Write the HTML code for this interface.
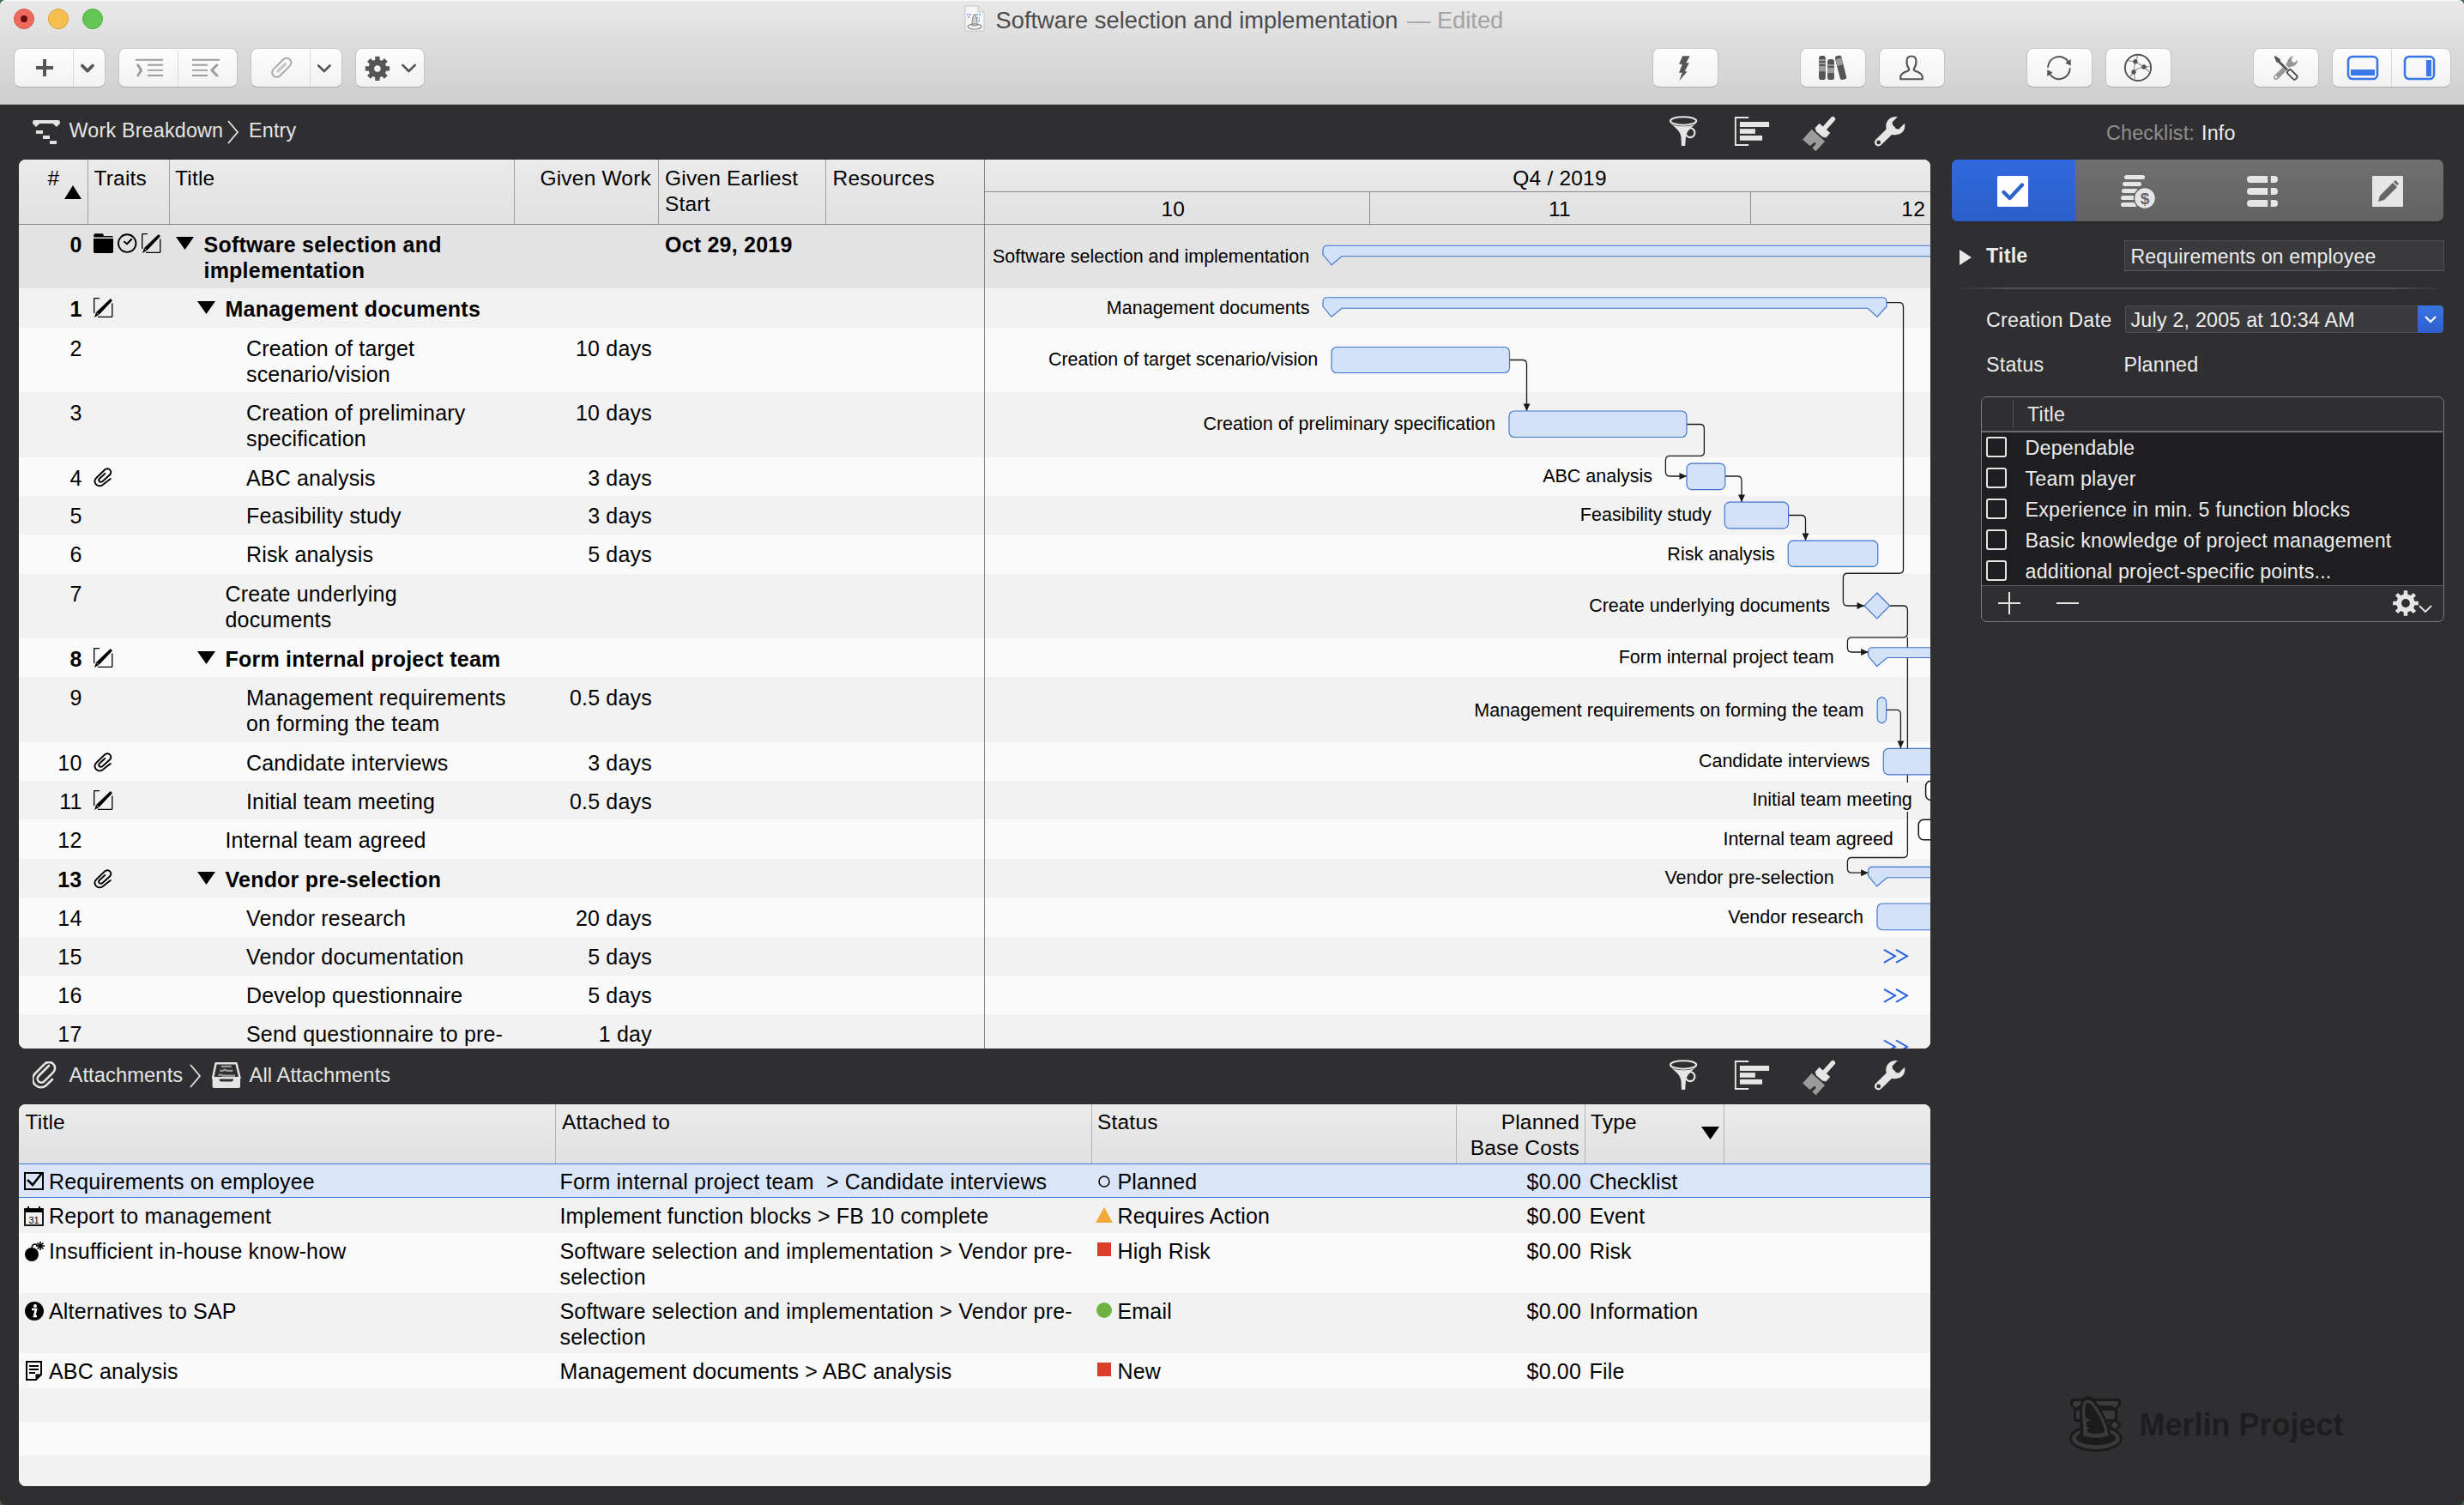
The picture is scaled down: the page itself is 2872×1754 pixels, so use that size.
<!DOCTYPE html>
<html><head><meta charset="utf-8"><style>
*{box-sizing:border-box;margin:0;padding:0}
html,body{width:2872px;height:1754px;overflow:hidden;background:#2f2f31;font-family:"Liberation Sans",sans-serif;position:relative}
.a{position:absolute}
.t{position:absolute;white-space:nowrap;color:#000}
</style></head>
<body>
<div class="a" style="left:0.00px;top:0.00px;width:2872.00px;height:122.00px;background:linear-gradient(#e9e9e9 0%,#dcdcdc 45%,#cfcfcf 100%);"></div>
<div class="a" style="left:0.00px;top:121.00px;width:2872.00px;height:1.00px;background:#b9b9b9;"></div>
<div class="a" style="left:16.00px;top:10.00px;width:24.00px;height:24.00px;border-radius:50%;background:#ee6a5e;border:1px solid #d5574b;"></div>
<div class="a" style="left:56.00px;top:10.00px;width:24.00px;height:24.00px;border-radius:50%;background:#f5be4f;border:1px solid #d9a23b;"></div>
<div class="a" style="left:96.00px;top:10.00px;width:24.00px;height:24.00px;border-radius:50%;background:#62c554;border:1px solid #50a944;"></div>
<div class="a" style="left:24.00px;top:18.00px;width:8.00px;height:8.00px;border-radius:50%;background:#4d0000;opacity:.85"></div>
<svg class="a" style="left:1124.00px;top:6.00px;" width="24" height="31" viewBox="0 0 24 31"><path d="M1 1h15l7 7v22H1z" fill="#f6f6f6" stroke="#c5c5c5" stroke-width="1"/><path d="M16 1v7h7" fill="#e8e8e8" stroke="#c5c5c5"/><path d="M3 11h5M14 11h5M4 14h3M14 15h4M13 18h5" stroke="#6d9ae0" stroke-width="1.6" stroke-dasharray="2 1"/><path d="M9 24 C9 17 10 12 12 10 C14 13 15 18 15 24z" fill="#d0d0d0" stroke="#888" stroke-width="1"/><ellipse cx="12" cy="25" rx="8" ry="3" fill="none" stroke="#888" stroke-width="1.2"/></svg>
<div class="t" style="top:7.66px;font-size:27.3px;line-height:32.76px;left:1160.50px;color:#4c4c4c;">Software selection and implementation</div>
<div class="t" style="top:7.66px;font-size:27.3px;line-height:32.76px;left:1640.00px;color:#a3a3a3;">— Edited</div>
<div class="a" style="left:15.50px;top:56.00px;width:107.00px;height:46.00px;background:linear-gradient(#fdfdfd,#f2f2f2);border:1px solid #c4c4c4;border-top-color:#cfcfcf;border-bottom-color:#aaaaaa;border-radius:8px;"></div>
<div class="a" style="left:84.50px;top:57.50px;width:1.50px;height:43.00px;background:#d9d9d9;"></div>
<div class="a" style="left:137.50px;top:56.00px;width:139.00px;height:46.00px;background:linear-gradient(#fdfdfd,#f2f2f2);border:1px solid #c4c4c4;border-top-color:#cfcfcf;border-bottom-color:#aaaaaa;border-radius:8px;"></div>
<div class="a" style="left:206.50px;top:57.50px;width:1.50px;height:43.00px;background:#d9d9d9;"></div>
<div class="a" style="left:291.50px;top:56.00px;width:107.00px;height:46.00px;background:linear-gradient(#fdfdfd,#f2f2f2);border:1px solid #c4c4c4;border-top-color:#cfcfcf;border-bottom-color:#aaaaaa;border-radius:8px;"></div>
<div class="a" style="left:360.50px;top:57.50px;width:1.50px;height:43.00px;background:#d9d9d9;"></div>
<div class="a" style="left:413.50px;top:56.00px;width:81.00px;height:46.00px;background:linear-gradient(#fdfdfd,#f2f2f2);border:1px solid #c4c4c4;border-top-color:#cfcfcf;border-bottom-color:#aaaaaa;border-radius:8px;"></div>
<div class="a" style="left:1925.50px;top:56.00px;width:77.00px;height:46.00px;background:linear-gradient(#fdfdfd,#f2f2f2);border:1px solid #c4c4c4;border-top-color:#cfcfcf;border-bottom-color:#aaaaaa;border-radius:8px;"></div>
<div class="a" style="left:2097.50px;top:56.00px;width:77.00px;height:46.00px;background:linear-gradient(#fdfdfd,#f2f2f2);border:1px solid #c4c4c4;border-top-color:#cfcfcf;border-bottom-color:#aaaaaa;border-radius:8px;"></div>
<div class="a" style="left:2189.50px;top:56.00px;width:77.00px;height:46.00px;background:linear-gradient(#fdfdfd,#f2f2f2);border:1px solid #c4c4c4;border-top-color:#cfcfcf;border-bottom-color:#aaaaaa;border-radius:8px;"></div>
<div class="a" style="left:2361.50px;top:56.00px;width:77.00px;height:46.00px;background:linear-gradient(#fdfdfd,#f2f2f2);border:1px solid #c4c4c4;border-top-color:#cfcfcf;border-bottom-color:#aaaaaa;border-radius:8px;"></div>
<div class="a" style="left:2453.50px;top:56.00px;width:77.00px;height:46.00px;background:linear-gradient(#fdfdfd,#f2f2f2);border:1px solid #c4c4c4;border-top-color:#cfcfcf;border-bottom-color:#aaaaaa;border-radius:8px;"></div>
<div class="a" style="left:2625.50px;top:56.00px;width:77.00px;height:46.00px;background:linear-gradient(#fdfdfd,#f2f2f2);border:1px solid #c4c4c4;border-top-color:#cfcfcf;border-bottom-color:#aaaaaa;border-radius:8px;"></div>
<div class="a" style="left:2717.50px;top:56.00px;width:139.00px;height:46.00px;background:linear-gradient(#fdfdfd,#f2f2f2);border:1px solid #c4c4c4;border-top-color:#cfcfcf;border-bottom-color:#aaaaaa;border-radius:8px;"></div>
<div class="a" style="left:2786.50px;top:57.50px;width:1.50px;height:43.00px;background:#d9d9d9;"></div>
<svg class="a" style="left:10px;top:50px" width="300" height="60" viewBox="0 0 2464 493" preserveAspectRatio="none"><path d="M263 238 H427 M345 157 V320" stroke="#555555" stroke-width="33"/><path d="M705 218 L755 268 L805 218" fill="none" stroke="#555555" stroke-width="30" stroke-linecap="round" stroke-linejoin="round"/><path d="M1215 163 H1478 M1330 212 H1478 M1330 262 H1478 M1330 312 H1478" stroke="#9c9c9c" stroke-width="16"/><path d="M1238 212 L1270 262 L1238 312" fill="none" stroke="#9c9c9c" stroke-width="24" stroke-linecap="round" stroke-linejoin="round"/><path d="M1758 163 H2020 M1758 212 H1905 M1758 262 H1905 M1758 312 H1905" stroke="#9c9c9c" stroke-width="16"/><path d="M1995 212 L1945 262 L1995 312" fill="none" stroke="#9c9c9c" stroke-width="24" stroke-linecap="round" stroke-linejoin="round"/></svg>
<svg class="a" style="left:285px;top:50px" width="220" height="60" viewBox="0 0 2464 672" preserveAspectRatio="none"><g transform="rotate(-45 485 322)"><rect x="335" y="262" width="300" height="120" rx="60" fill="none" stroke="#a9a9a9" stroke-width="22"/><rect x="400" y="302" width="170" height="40" rx="20" fill="#c9c9c9"/></g><path d="M965 295 L1040 370 L1115 295" fill="none" stroke="#555555" stroke-width="30" stroke-linecap="round" stroke-linejoin="round"/><rect x="1705" y="177" width="60" height="80" fill="#555555" transform="rotate(0 1735 335)"/><rect x="1705" y="177" width="60" height="80" fill="#555555" transform="rotate(45 1735 335)"/><rect x="1705" y="177" width="60" height="80" fill="#555555" transform="rotate(90 1735 335)"/><rect x="1705" y="177" width="60" height="80" fill="#555555" transform="rotate(135 1735 335)"/><rect x="1705" y="177" width="60" height="80" fill="#555555" transform="rotate(180 1735 335)"/><rect x="1705" y="177" width="60" height="80" fill="#555555" transform="rotate(225 1735 335)"/><rect x="1705" y="177" width="60" height="80" fill="#555555" transform="rotate(270 1735 335)"/><rect x="1705" y="177" width="60" height="80" fill="#555555" transform="rotate(315 1735 335)"/><circle cx="1735" cy="335" r="118" fill="#555555"/><circle cx="1735" cy="335" r="42" fill="#f6f6f6"/><path d="M2065 290 L2145 370 L2225 290" fill="none" stroke="#555555" stroke-width="30" stroke-linecap="round" stroke-linejoin="round"/></svg>
<svg class="a" style="left:1920px;top:50px" width="90" height="58" viewBox="0 0 2335 1505" preserveAspectRatio="none"><path d="M1070 395 L1290 395 L1175 605 L1265 605 L1135 860 L1210 860 L965 1150 L1055 900 L960 900 L1060 640 L960 640 Z" fill="#555555"/></svg>
<svg class="a" style="left:2095px;top:50px" width="180" height="58" viewBox="0 0 2464 794" preserveAspectRatio="none"><rect x="343" y="205" width="107" height="385" rx="40" fill="#555555"/><rect x="343" y="262" width="107" height="28" fill="#9c9c9c"/><rect x="343" y="315" width="107" height="28" fill="#9c9c9c"/><rect x="343" y="370" width="107" height="85" fill="#9c9c9c"/><rect x="480" y="260" width="108" height="330" rx="40" fill="#555555"/><rect x="480" y="343" width="108" height="25" fill="#9c9c9c"/><rect x="480" y="395" width="108" height="85" fill="#9c9c9c"/><g transform="rotate(-14 692 395)"><rect x="640" y="200" width="104" height="390" rx="35" fill="#555555"/><rect x="640" y="245" width="104" height="110" fill="#9c9c9c"/></g><path d="M1645 578 L1645 545 C1645 480 1720 470 1775 440 C1790 432 1780 405 1768 390 C1745 360 1745 320 1745 290 C1745 235 1775 212 1820 212 C1865 212 1895 235 1895 290 C1895 320 1895 360 1872 390 C1860 405 1850 432 1865 440 C1920 470 1995 480 1995 545 L1995 578 Z" fill="none" stroke="#555555" stroke-width="30" stroke-linejoin="round"/></svg>
<svg class="a" style="left:2355px;top:50px" width="90" height="58" viewBox="0 0 2335 1505" preserveAspectRatio="none"><path d="M830 745 A335 335 0 0 1 1440 560" fill="none" stroke="#555555" stroke-width="50"/><path d="M1525 495 L1525 690 L1355 610 Z" fill="#555555"/><path d="M1500 760 A335 335 0 0 1 880 935" fill="none" stroke="#555555" stroke-width="50"/><path d="M810 810 L810 1010 L975 895 Z" fill="#555555"/></svg>
<svg class="a" style="left:2450px;top:50px" width="90" height="58" viewBox="0 0 2335 1505" preserveAspectRatio="none"><g stroke="#8e8e8e" stroke-width="30" fill="none"><path d="M800 545 L1010 565 M1080 390 L1010 565 L1270 725 M1010 565 Q975 720 960 880 M1270 725 L1445 720 M1270 725 L1420 870 M1270 725 Q1080 760 960 880 M960 880 L850 1020 M960 880 L1000 1100"/></g><circle cx="1090" cy="750" r="392" fill="none" stroke="#555555" stroke-width="50"/><g fill="#555555"><circle cx="1010" cy="565" r="70"/><circle cx="1270" cy="725" r="70"/><circle cx="960" cy="880" r="70"/></g></svg>
<svg class="a" style="left:2620px;top:50px" width="90" height="58" viewBox="0 0 2335 1505" preserveAspectRatio="none"><path d="M855 1045 L1240 660" stroke="#969696" stroke-width="150" stroke-linecap="round"/><path d="M1180 640 C1200 470 1290 400 1390 395 L1320 480 L1340 570 L1420 600 L1500 510 C1510 640 1430 700 1290 720 Z" fill="#969696"/><circle cx="855" cy="1040" r="38" fill="#f6f6f6"/><path d="M870 470 L1230 830" stroke="#f6f6f6" stroke-width="130"/><path d="M800 420 L835 390 L985 500 L985 535 L900 590 L865 575 Z" fill="#555555"/><path d="M920 545 L1230 855" stroke="#555555" stroke-width="75"/><g transform="rotate(-45 1340 955)"><rect x="1265" y="790" width="150" height="340" rx="55" fill="#f6f6f6" stroke="#f6f6f6" stroke-width="80"/><rect x="1265" y="790" width="150" height="340" rx="55" fill="#f4f4f4" stroke="#555555" stroke-width="52"/></g></svg>
<svg class="a" style="left:2735.00px;top:64.00px;" width="38" height="30" viewBox="0 0 38 30"><rect x="2" y="2" width="34" height="26" rx="5" fill="none" stroke="#3b78e7" stroke-width="2.6"/><rect x="5" y="17" width="28" height="7" fill="#3b78e7"/></svg>
<svg class="a" style="left:2801.00px;top:64.00px;" width="38" height="30" viewBox="0 0 38 30"><rect x="2" y="2" width="34" height="26" rx="5" fill="none" stroke="#3b78e7" stroke-width="2.6"/><rect x="27" y="6" width="6" height="19" fill="#3b78e7"/></svg>
<svg class="a" style="left:30px;top:130px" width="50" height="45" viewBox="0 0 1672 1505" preserveAspectRatio="none"><g fill="#e4e4e4"><path d="M340 335 H1265 Q1335 335 1335 410 V470 L1200 600 L1060 470 H540 L400 600 L270 470 V410 Q270 335 340 335 Z"/><rect x="400" y="735" width="270" height="130"/><rect x="670" y="935" width="265" height="135"/><rect x="935" y="1140" width="270" height="130"/></g></svg>
<div class="t" style="top:139.45px;font-size:23.3px;line-height:27.96px;left:80.50px;color:#e4e4e4;letter-spacing:0.2px;">Work Breakdown</div>
<svg class="a" style="left:264.00px;top:140.00px;" width="16" height="28" viewBox="0 0 16 28"><path d="M2 1 L13 14 L2 27" fill="none" stroke="#e4e4e4" stroke-width="1.8"/></svg>
<div class="t" style="top:139.45px;font-size:23.3px;line-height:27.96px;left:290.00px;color:#e4e4e4;letter-spacing:0.2px;">Entry</div>
<svg class="a" style="left:38.00px;top:1237.00px;" width="30" height="32" viewBox="0 0 30 32"><path d="M20 5 L8 17 a4.5 4.5 0 0 0 6.4 6.4 L25 12.8 a7 7 0 0 0 -9.9 -9.9 L3.5 14.5 a9.5 9.5 0 0 0 13.4 13.4 L24 21" fill="none" stroke="#e4e4e4" stroke-width="2.6" stroke-linecap="round" transform="translate(-1,0)"/></svg>
<div class="t" style="top:1238.57px;font-size:23.7px;line-height:28.44px;left:80.50px;color:#e4e4e4;letter-spacing:0.1px;">Attachments</div>
<svg class="a" style="left:220.00px;top:1240.00px;" width="16" height="28" viewBox="0 0 16 28"><path d="M2 1 L13 14 L2 27" fill="none" stroke="#e4e4e4" stroke-width="1.8"/></svg>
<svg class="a" style="left:0px;top:1150px" width="400" height="150" viewBox="0 0 2464 924" preserveAspectRatio="none"><path d="M1550 550 H1697 L1722 655 H1528 Z" fill="none" stroke="#e4e4e4" stroke-width="15" stroke-linejoin="round"/><path d="M1525 650 H1725 V715 Q1725 727 1713 727 H1537 Q1525 727 1525 715 Z M1575 650 V668 Q1575 680 1587 680 H1663 Q1675 680 1675 668 V650 Z" fill="#e4e4e4" fill-rule="evenodd"/><path d="M1588 572 H1662 M1578 603 H1600 Q1615 590 1630 603 H1672 M1568 638 Q1580 625 1600 638 H1688" fill="none" stroke="#9a9a9a" stroke-width="13"/></svg>
<div class="t" style="top:1238.57px;font-size:23.7px;line-height:28.44px;left:290.50px;color:#e4e4e4;letter-spacing:0.1px;">All Attachments</div>
<svg class="a" style="left:1930px;top:125.0px" width="310" height="60.0" viewBox="0 0 2464 477" preserveAspectRatio="none"><path d="M135 140 A120 37 0 0 0 375 140 C340 190 292 205 278 272 L272 357 L238 357 L234 272 C220 205 168 190 135 140 Z" fill="#e6e6e6"/><ellipse cx="255" cy="127" rx="120" ry="38" fill="none" stroke="#e6e6e6" stroke-width="17"/><circle cx="318" cy="236" r="43" fill="none" stroke="#e6e6e6" stroke-width="17"/><path d="M860 95 L738 95 L738 350 L860 350" fill="none" stroke="#e6e6e6" stroke-width="15"/><rect x="778" y="135" width="272" height="48" fill="#e6e6e6"/><rect x="778" y="200" width="143" height="45" fill="#e6e6e6"/><rect x="778" y="262" width="208" height="46" fill="#e6e6e6"/><g transform="rotate(42 1520 240)"><rect x="1500" y="40" width="44" height="150" rx="22" fill="#e6e6e6"/><path d="M1455 175 L1590 175 L1590 235 L1560 250 L1485 250 L1455 235 Z" fill="#e6e6e6"/><path d="M1440 265 L1605 265 L1605 390 L1560 390 L1560 340 Q1555 330 1540 335 L1530 390 L1440 390 Z" fill="#9b9b9b"/></g><path d="M2062 325 L2185 205" stroke="#e6e6e6" stroke-width="72" stroke-linecap="round"/><path d="M2135 200 C2120 130 2170 80 2240 88 L2190 140 L2200 190 L2250 205 L2305 150 C2320 225 2260 270 2185 252 Z" fill="#e6e6e6"/><circle cx="2064" cy="325" r="19" fill="#2e2e30"/></svg>
<svg class="a" style="left:1930px;top:1225.0px" width="310" height="60.0" viewBox="0 0 2464 477" preserveAspectRatio="none"><path d="M135 140 A120 37 0 0 0 375 140 C340 190 292 205 278 272 L272 357 L238 357 L234 272 C220 205 168 190 135 140 Z" fill="#e6e6e6"/><ellipse cx="255" cy="127" rx="120" ry="38" fill="none" stroke="#e6e6e6" stroke-width="17"/><circle cx="318" cy="236" r="43" fill="none" stroke="#e6e6e6" stroke-width="17"/><path d="M860 95 L738 95 L738 350 L860 350" fill="none" stroke="#e6e6e6" stroke-width="15"/><rect x="778" y="135" width="272" height="48" fill="#e6e6e6"/><rect x="778" y="200" width="143" height="45" fill="#e6e6e6"/><rect x="778" y="262" width="208" height="46" fill="#e6e6e6"/><g transform="rotate(42 1520 240)"><rect x="1500" y="40" width="44" height="150" rx="22" fill="#e6e6e6"/><path d="M1455 175 L1590 175 L1590 235 L1560 250 L1485 250 L1455 235 Z" fill="#e6e6e6"/><path d="M1440 265 L1605 265 L1605 390 L1560 390 L1560 340 Q1555 330 1540 335 L1530 390 L1440 390 Z" fill="#9b9b9b"/></g><path d="M2062 325 L2185 205" stroke="#e6e6e6" stroke-width="72" stroke-linecap="round"/><path d="M2135 200 C2120 130 2170 80 2240 88 L2190 140 L2200 190 L2250 205 L2305 150 C2320 225 2260 270 2185 252 Z" fill="#e6e6e6"/><circle cx="2064" cy="325" r="19" fill="#2e2e30"/></svg>
<div class="a" style="left:22px;top:186px;width:2228px;height:1036px;border-radius:8px;overflow:hidden;background:#fafafa">
<div class="a" style="left:-22px;top:-186px;width:2872px;height:1754px">
<div class="a" style="left:0.00px;top:186.00px;width:2872.00px;height:75.00px;background:linear-gradient(#ebebeb,#e1e1e1);"></div>
<div class="a" style="left:0.00px;top:261.00px;width:2872.00px;height:1.00px;background:#8c8c8c;"></div>
<div class="a" style="left:0.00px;top:262.25px;width:2872.00px;height:75.00px;background:#e3e3e3;"></div>
<div class="a" style="left:0.00px;top:336.25px;width:2872.00px;height:45.50px;background:#f2f2f2;"></div>
<div class="a" style="left:0.00px;top:381.75px;width:2872.00px;height:75.25px;background:#fafafa;"></div>
<div class="a" style="left:0.00px;top:457.00px;width:2872.00px;height:76.00px;background:#f2f2f2;"></div>
<div class="a" style="left:0.00px;top:533.00px;width:2872.00px;height:44.50px;background:#fafafa;"></div>
<div class="a" style="left:0.00px;top:577.50px;width:2872.00px;height:45.00px;background:#f2f2f2;"></div>
<div class="a" style="left:0.00px;top:622.50px;width:2872.00px;height:46.00px;background:#fafafa;"></div>
<div class="a" style="left:0.00px;top:668.50px;width:2872.00px;height:75.50px;background:#f2f2f2;"></div>
<div class="a" style="left:0.00px;top:744.00px;width:2872.00px;height:45.00px;background:#fafafa;"></div>
<div class="a" style="left:0.00px;top:789.00px;width:2872.00px;height:76.00px;background:#f2f2f2;"></div>
<div class="a" style="left:0.00px;top:865.00px;width:2872.00px;height:45.00px;background:#fafafa;"></div>
<div class="a" style="left:0.00px;top:910.00px;width:2872.00px;height:45.00px;background:#f2f2f2;"></div>
<div class="a" style="left:0.00px;top:955.00px;width:2872.00px;height:46.00px;background:#fafafa;"></div>
<div class="a" style="left:0.00px;top:1001.00px;width:2872.00px;height:45.00px;background:#f2f2f2;"></div>
<div class="a" style="left:0.00px;top:1046.00px;width:2872.00px;height:45.50px;background:#fafafa;"></div>
<div class="a" style="left:0.00px;top:1091.50px;width:2872.00px;height:45.00px;background:#f2f2f2;"></div>
<div class="a" style="left:0.00px;top:1136.50px;width:2872.00px;height:45.00px;background:#fafafa;"></div>
<div class="a" style="left:0.00px;top:1181.50px;width:2872.00px;height:58.50px;background:#f2f2f2;"></div>
<div class="a" style="left:102.00px;top:186.00px;width:1.00px;height:75.00px;background:#a0a0a0;"></div>
<div class="a" style="left:197.00px;top:186.00px;width:1.00px;height:75.00px;background:#a0a0a0;"></div>
<div class="a" style="left:599.00px;top:186.00px;width:1.00px;height:75.00px;background:#a0a0a0;"></div>
<div class="a" style="left:767.00px;top:186.00px;width:1.00px;height:75.00px;background:#a0a0a0;"></div>
<div class="a" style="left:962.00px;top:186.00px;width:1.00px;height:75.00px;background:#a0a0a0;"></div>
<div class="a" style="left:1147.00px;top:186.00px;width:1.00px;height:1040.00px;background:#858585;"></div>
<div class="a" style="left:1147.00px;top:223.00px;width:2872.00px;height:1.00px;background:#8c8c8c;"></div>
<div class="a" style="left:1596.00px;top:223.00px;width:1.00px;height:38.00px;background:#8c8c8c;"></div>
<div class="a" style="left:2040.00px;top:223.00px;width:1.00px;height:38.00px;background:#8c8c8c;"></div>
<div class="t" style="top:192.81px;font-size:24.5px;line-height:29.4px;left:55.50px;letter-spacing:0.2px;">#</div>
<svg class="a" style="left:75.00px;top:216.00px;" width="20" height="16" viewBox="0 0 20 16"><path d="M10 0 L20 16 L0 16 Z" fill="#000"/></svg>
<div class="t" style="top:192.81px;font-size:24.5px;line-height:29.4px;left:109.50px;letter-spacing:0.2px;">Traits</div>
<div class="t" style="top:192.81px;font-size:24.5px;line-height:29.4px;left:204.00px;letter-spacing:0.2px;">Title</div>
<div class="t" style="top:192.81px;font-size:24.5px;line-height:29.4px;right:2113.00px;text-align:right;letter-spacing:0.2px;">Given Work</div>
<div class="t" style="top:192.81px;font-size:24.5px;line-height:29.4px;left:775.00px;letter-spacing:0.2px;">Given Earliest</div>
<div class="t" style="top:222.81px;font-size:24.5px;line-height:29.4px;left:775.00px;letter-spacing:0.2px;">Start</div>
<div class="t" style="top:192.81px;font-size:24.5px;line-height:29.4px;left:970.50px;letter-spacing:0.2px;">Resources</div>
<div class="t" style="top:192.81px;font-size:24.5px;line-height:29.4px;left:1318.00px;width:1000px;text-align:center;letter-spacing:0.2px;">Q4 / 2019</div>
<div class="t" style="top:229.11px;font-size:24.5px;line-height:29.4px;left:1353.50px;letter-spacing:0.2px;">10</div>
<div class="t" style="top:229.11px;font-size:24.5px;line-height:29.4px;left:1805.00px;letter-spacing:0.2px;">11</div>
<div class="t" style="top:229.11px;font-size:24.5px;line-height:29.4px;right:628.00px;text-align:right;letter-spacing:0.2px;">12</div>
<div class="t" style="top:270.09px;font-size:25px;line-height:30.0px;right:2776.50px;text-align:right;font-weight:bold;letter-spacing:0.22px;">0</div>
<svg class="a" style="left:109.40px;top:272.25px;" width="24" height="24" viewBox="0 0 24 24"><path d="M0.3 4.5 V2 Q0.3 0.3 2 0.3 H10 Q11.5 0.3 11.8 2 V3 H21.5 Q23 3 23 4.5 Z" fill="#000"/><path d="M0 6 H23 V21.3 Q23 23 21.3 23 H1.7 Q0 23 0 21.3 Z" fill="#000"/></svg>
<svg class="a" style="left:137.00px;top:272.25px;" width="24" height="24" viewBox="0 0 24 24"><circle cx="11.2" cy="11.6" r="10.3" fill="none" stroke="#000" stroke-width="1.9"/><path d="M7.4 9.3 L11 12.3 L16.8 6.3" fill="none" stroke="#000" stroke-width="2"/></svg>
<svg class="a" style="left:165.00px;top:272.25px;" width="24" height="24" viewBox="0 0 24 24"><path d="M7 0.7 H1.2 Q0.7 0.7 0.7 1.2 V18" fill="none" stroke="#000" stroke-width="1.3"/><path d="M5 22.3 H21.3 Q21.8 22.3 21.8 21.8 V6.5" fill="none" stroke="#000" stroke-width="1.3"/><path d="M19.5 1.2 Q21.8 1.5 21.6 3.8 L6.5 19.8 L3 17 Z" fill="#000"/><path d="M3 17 L6.5 19.8 L1 23 Z" fill="#000"/><path d="M4 18 L5.5 19.5" stroke="#fff" stroke-width="0.8"/></svg>
<svg class="a" style="left:205.00px;top:275.75px;" width="22" height="16" viewBox="0 0 22 16"><path d="M0 0 L21 0 L10.5 15 Z" fill="#000"/></svg>
<div class="t" style="top:270.09px;font-size:25px;line-height:30.0px;left:237.50px;font-weight:bold;letter-spacing:0.22px;">Software selection and</div>
<div class="t" style="top:300.09px;font-size:25px;line-height:30.0px;left:237.50px;font-weight:bold;letter-spacing:0.22px;">implementation</div>
<div class="t" style="top:270.09px;font-size:25px;line-height:30.0px;left:775.00px;font-weight:bold;letter-spacing:0.22px;">Oct 29, 2019</div>
<div class="t" style="top:345.09px;font-size:25px;line-height:30.0px;right:2776.50px;text-align:right;font-weight:bold;letter-spacing:0.22px;">1</div>
<svg class="a" style="left:109.00px;top:347.25px;" width="24" height="24" viewBox="0 0 24 24"><path d="M7 0.7 H1.2 Q0.7 0.7 0.7 1.2 V18" fill="none" stroke="#000" stroke-width="1.3"/><path d="M5 22.3 H21.3 Q21.8 22.3 21.8 21.8 V6.5" fill="none" stroke="#000" stroke-width="1.3"/><path d="M19.5 1.2 Q21.8 1.5 21.6 3.8 L6.5 19.8 L3 17 Z" fill="#000"/><path d="M3 17 L6.5 19.8 L1 23 Z" fill="#000"/><path d="M4 18 L5.5 19.5" stroke="#fff" stroke-width="0.8"/></svg>
<svg class="a" style="left:230.00px;top:350.75px;" width="22" height="16" viewBox="0 0 22 16"><path d="M0 0 L21 0 L10.5 15 Z" fill="#000"/></svg>
<div class="t" style="top:345.09px;font-size:25px;line-height:30.0px;left:262.50px;font-weight:bold;letter-spacing:0.22px;">Management documents</div>
<div class="t" style="top:390.59px;font-size:25px;line-height:30.0px;right:2776.50px;text-align:right;letter-spacing:0.17px;">2</div>
<div class="t" style="top:390.59px;font-size:25px;line-height:30.0px;left:287.00px;letter-spacing:0.17px;">Creation of target</div>
<div class="t" style="top:420.59px;font-size:25px;line-height:30.0px;left:287.00px;letter-spacing:0.17px;">scenario/vision</div>
<div class="t" style="top:390.59px;font-size:25px;line-height:30.0px;right:2112.20px;text-align:right;letter-spacing:0.17px;">10 days</div>
<div class="t" style="top:465.84px;font-size:25px;line-height:30.0px;right:2776.50px;text-align:right;letter-spacing:0.17px;">3</div>
<div class="t" style="top:465.84px;font-size:25px;line-height:30.0px;left:287.00px;letter-spacing:0.17px;">Creation of preliminary</div>
<div class="t" style="top:495.84px;font-size:25px;line-height:30.0px;left:287.00px;letter-spacing:0.17px;">specification</div>
<div class="t" style="top:465.84px;font-size:25px;line-height:30.0px;right:2112.20px;text-align:right;letter-spacing:0.17px;">10 days</div>
<div class="t" style="top:541.84px;font-size:25px;line-height:30.0px;right:2776.50px;text-align:right;letter-spacing:0.17px;">4</div>
<svg class="a" style="left:109.00px;top:543.50px;" width="24" height="24" viewBox="0 0 24 24"><path d="M19.8 14 L10.5 21.2 C7.5 23.3 3.8 22.3 2.2 19.5 C1 17.2 1.5 14.5 3.5 12.8 L12.8 3.8 C14.8 1.8 17.8 1.8 19.3 3.8 C20.8 5.8 20.3 8.2 18.5 9.8 L10.5 17 C9 18.2 7.2 18 6.5 16.8 C5.8 15.6 6.3 14.3 7.3 13.5 L13.3 8" fill="none" stroke="#000" stroke-width="1.9" stroke-linecap="round"/></svg>
<div class="t" style="top:541.84px;font-size:25px;line-height:30.0px;left:287.00px;letter-spacing:0.17px;">ABC analysis</div>
<div class="t" style="top:541.84px;font-size:25px;line-height:30.0px;right:2112.20px;text-align:right;letter-spacing:0.17px;">3 days</div>
<div class="t" style="top:586.34px;font-size:25px;line-height:30.0px;right:2776.50px;text-align:right;letter-spacing:0.17px;">5</div>
<div class="t" style="top:586.34px;font-size:25px;line-height:30.0px;left:287.00px;letter-spacing:0.17px;">Feasibility study</div>
<div class="t" style="top:586.34px;font-size:25px;line-height:30.0px;right:2112.20px;text-align:right;letter-spacing:0.17px;">3 days</div>
<div class="t" style="top:631.34px;font-size:25px;line-height:30.0px;right:2776.50px;text-align:right;letter-spacing:0.17px;">6</div>
<div class="t" style="top:631.34px;font-size:25px;line-height:30.0px;left:287.00px;letter-spacing:0.17px;">Risk analysis</div>
<div class="t" style="top:631.34px;font-size:25px;line-height:30.0px;right:2112.20px;text-align:right;letter-spacing:0.17px;">5 days</div>
<div class="t" style="top:677.34px;font-size:25px;line-height:30.0px;right:2776.50px;text-align:right;letter-spacing:0.17px;">7</div>
<div class="t" style="top:677.34px;font-size:25px;line-height:30.0px;left:262.50px;letter-spacing:0.17px;">Create underlying</div>
<div class="t" style="top:707.34px;font-size:25px;line-height:30.0px;left:262.50px;letter-spacing:0.17px;">documents</div>
<div class="t" style="top:752.84px;font-size:25px;line-height:30.0px;right:2776.50px;text-align:right;font-weight:bold;letter-spacing:0.22px;">8</div>
<svg class="a" style="left:109.00px;top:755.00px;" width="24" height="24" viewBox="0 0 24 24"><path d="M7 0.7 H1.2 Q0.7 0.7 0.7 1.2 V18" fill="none" stroke="#000" stroke-width="1.3"/><path d="M5 22.3 H21.3 Q21.8 22.3 21.8 21.8 V6.5" fill="none" stroke="#000" stroke-width="1.3"/><path d="M19.5 1.2 Q21.8 1.5 21.6 3.8 L6.5 19.8 L3 17 Z" fill="#000"/><path d="M3 17 L6.5 19.8 L1 23 Z" fill="#000"/><path d="M4 18 L5.5 19.5" stroke="#fff" stroke-width="0.8"/></svg>
<svg class="a" style="left:230.00px;top:758.50px;" width="22" height="16" viewBox="0 0 22 16"><path d="M0 0 L21 0 L10.5 15 Z" fill="#000"/></svg>
<div class="t" style="top:752.84px;font-size:25px;line-height:30.0px;left:262.50px;font-weight:bold;letter-spacing:0.22px;">Form internal project team</div>
<div class="t" style="top:797.84px;font-size:25px;line-height:30.0px;right:2776.50px;text-align:right;letter-spacing:0.17px;">9</div>
<div class="t" style="top:797.84px;font-size:25px;line-height:30.0px;left:287.00px;letter-spacing:0.17px;">Management requirements</div>
<div class="t" style="top:827.84px;font-size:25px;line-height:30.0px;left:287.00px;letter-spacing:0.17px;">on forming the team</div>
<div class="t" style="top:797.84px;font-size:25px;line-height:30.0px;right:2112.20px;text-align:right;letter-spacing:0.17px;">0.5 days</div>
<div class="t" style="top:873.84px;font-size:25px;line-height:30.0px;right:2776.50px;text-align:right;letter-spacing:0.17px;">10</div>
<svg class="a" style="left:109.00px;top:875.50px;" width="24" height="24" viewBox="0 0 24 24"><path d="M19.8 14 L10.5 21.2 C7.5 23.3 3.8 22.3 2.2 19.5 C1 17.2 1.5 14.5 3.5 12.8 L12.8 3.8 C14.8 1.8 17.8 1.8 19.3 3.8 C20.8 5.8 20.3 8.2 18.5 9.8 L10.5 17 C9 18.2 7.2 18 6.5 16.8 C5.8 15.6 6.3 14.3 7.3 13.5 L13.3 8" fill="none" stroke="#000" stroke-width="1.9" stroke-linecap="round"/></svg>
<div class="t" style="top:873.84px;font-size:25px;line-height:30.0px;left:287.00px;letter-spacing:0.17px;">Candidate interviews</div>
<div class="t" style="top:873.84px;font-size:25px;line-height:30.0px;right:2112.20px;text-align:right;letter-spacing:0.17px;">3 days</div>
<div class="t" style="top:918.84px;font-size:25px;line-height:30.0px;right:2776.50px;text-align:right;letter-spacing:0.17px;">11</div>
<svg class="a" style="left:109.00px;top:921.00px;" width="24" height="24" viewBox="0 0 24 24"><path d="M7 0.7 H1.2 Q0.7 0.7 0.7 1.2 V18" fill="none" stroke="#000" stroke-width="1.3"/><path d="M5 22.3 H21.3 Q21.8 22.3 21.8 21.8 V6.5" fill="none" stroke="#000" stroke-width="1.3"/><path d="M19.5 1.2 Q21.8 1.5 21.6 3.8 L6.5 19.8 L3 17 Z" fill="#000"/><path d="M3 17 L6.5 19.8 L1 23 Z" fill="#000"/><path d="M4 18 L5.5 19.5" stroke="#fff" stroke-width="0.8"/></svg>
<div class="t" style="top:918.84px;font-size:25px;line-height:30.0px;left:287.00px;letter-spacing:0.17px;">Initial team meeting</div>
<div class="t" style="top:918.84px;font-size:25px;line-height:30.0px;right:2112.20px;text-align:right;letter-spacing:0.17px;">0.5 days</div>
<div class="t" style="top:963.84px;font-size:25px;line-height:30.0px;right:2776.50px;text-align:right;letter-spacing:0.17px;">12</div>
<div class="t" style="top:963.84px;font-size:25px;line-height:30.0px;left:262.50px;letter-spacing:0.17px;">Internal team agreed</div>
<div class="t" style="top:1009.84px;font-size:25px;line-height:30.0px;right:2776.50px;text-align:right;font-weight:bold;letter-spacing:0.22px;">13</div>
<svg class="a" style="left:109.00px;top:1011.50px;" width="24" height="24" viewBox="0 0 24 24"><path d="M19.8 14 L10.5 21.2 C7.5 23.3 3.8 22.3 2.2 19.5 C1 17.2 1.5 14.5 3.5 12.8 L12.8 3.8 C14.8 1.8 17.8 1.8 19.3 3.8 C20.8 5.8 20.3 8.2 18.5 9.8 L10.5 17 C9 18.2 7.2 18 6.5 16.8 C5.8 15.6 6.3 14.3 7.3 13.5 L13.3 8" fill="none" stroke="#000" stroke-width="1.9" stroke-linecap="round"/></svg>
<svg class="a" style="left:230.00px;top:1015.50px;" width="22" height="16" viewBox="0 0 22 16"><path d="M0 0 L21 0 L10.5 15 Z" fill="#000"/></svg>
<div class="t" style="top:1009.84px;font-size:25px;line-height:30.0px;left:262.50px;font-weight:bold;letter-spacing:0.22px;">Vendor pre-selection</div>
<div class="t" style="top:1054.84px;font-size:25px;line-height:30.0px;right:2776.50px;text-align:right;letter-spacing:0.17px;">14</div>
<div class="t" style="top:1054.84px;font-size:25px;line-height:30.0px;left:287.00px;letter-spacing:0.17px;">Vendor research</div>
<div class="t" style="top:1054.84px;font-size:25px;line-height:30.0px;right:2112.20px;text-align:right;letter-spacing:0.17px;">20 days</div>
<div class="t" style="top:1100.34px;font-size:25px;line-height:30.0px;right:2776.50px;text-align:right;letter-spacing:0.17px;">15</div>
<div class="t" style="top:1100.34px;font-size:25px;line-height:30.0px;left:287.00px;letter-spacing:0.17px;">Vendor documentation</div>
<div class="t" style="top:1100.34px;font-size:25px;line-height:30.0px;right:2112.20px;text-align:right;letter-spacing:0.17px;">5 days</div>
<div class="t" style="top:1145.34px;font-size:25px;line-height:30.0px;right:2776.50px;text-align:right;letter-spacing:0.17px;">16</div>
<div class="t" style="top:1145.34px;font-size:25px;line-height:30.0px;left:287.00px;letter-spacing:0.17px;">Develop questionnaire</div>
<div class="t" style="top:1145.34px;font-size:25px;line-height:30.0px;right:2112.20px;text-align:right;letter-spacing:0.17px;">5 days</div>
<div class="t" style="top:1190.34px;font-size:25px;line-height:30.0px;right:2776.50px;text-align:right;letter-spacing:0.17px;">17</div>
<div class="t" style="top:1190.34px;font-size:25px;line-height:30.0px;left:287.00px;letter-spacing:0.17px;">Send questionnaire to pre-</div>
<div class="t" style="top:1190.34px;font-size:25px;line-height:30.0px;right:2112.20px;text-align:right;letter-spacing:0.17px;">1 day</div>
<svg class="a" style="left:0.00px;top:0.00px;pointer-events:none" width="2872" height="1754" viewBox="0 0 2872 1754"><path d="M1759.5 419.5 L1774.5 419.5 Q1779.5 419.5 1779.5 424.5 L1779.5 479" fill="none" stroke="#1a1a1a" stroke-width="1.3"/><path d="M1775.5 470.5 L1783.5 470.5 L1779.5 479 Z" fill="#1a1a1a"/><path d="M1966 494.5 L1981.4 494.5 Q1986.4 494.5 1986.4 499.5 L1986.4 526.4 Q1986.4 531.4 1981.4 531.4 L1946.4 531.4 Q1941.4 531.4 1941.4 536.4 L1941.4 550 Q1941.4 555 1946.4 555 L1966 555" fill="none" stroke="#1a1a1a" stroke-width="1.3"/><path d="M1957.5 551 L1957.5 559 L1966 555 Z" fill="#1a1a1a"/><path d="M2010.8 555 L2025 555 Q2030 555 2030 560 L2030 585" fill="none" stroke="#1a1a1a" stroke-width="1.3"/><path d="M2026 576.5 L2034 576.5 L2030 585 Z" fill="#1a1a1a"/><path d="M2084.6 600.5 L2099.5 600.5 Q2104.5 600.5 2104.5 605.5 L2104.5 630" fill="none" stroke="#1a1a1a" stroke-width="1.3"/><path d="M2100.5 621.5 L2108.5 621.5 L2104.5 630 Z" fill="#1a1a1a"/><path d="M2199 352.7 L2213.5 352.7 Q2218.5 352.7 2218.5 357.7 L2218.5 663.25 Q2218.5 668.25 2213.5 668.25 L2153.4 668.25 Q2148.4 668.25 2148.4 673.25 L2148.4 701 Q2148.4 706 2153.4 706 L2173 706" fill="none" stroke="#1a1a1a" stroke-width="1.3"/><path d="M2164.5 702 L2164.5 710 L2173 706 Z" fill="#1a1a1a"/><path d="M2202.7 706 L2218.4 706 Q2223.4 706 2223.4 711 L2223.4 737.8 Q2223.4 742.8 2218.4 742.8 L2158.4 742.8 Q2153.4 742.8 2153.4 747.8 L2153.4 755 Q2153.4 760 2158.4 760 L2177.6 760" fill="none" stroke="#1a1a1a" stroke-width="1.3"/><path d="M2169.1 756 L2169.1 764 L2177.6 760 Z" fill="#1a1a1a"/><path d="M2223.4 742.8 L2223.4 994.5 Q2223.4 999.5 2218.4 999.5 L2158.4 999.5 Q2153.4 999.5 2153.4 1004.5 L2153.4 1012.2 Q2153.4 1017.2 2158.4 1017.2 L2177.6 1017.2" fill="none" stroke="#1a1a1a" stroke-width="1.3"/><path d="M2169.1 1013.2 L2169.1 1021.2 L2177.6 1017.2 Z" fill="#1a1a1a"/><path d="M2198.6 827.4 L2210.4 827.4 Q2215.4 827.4 2215.4 832.4 L2215.4 872" fill="none" stroke="#1a1a1a" stroke-width="1.3"/><path d="M2211.4 863.5 L2219.4 863.5 L2215.4 872 Z" fill="#1a1a1a"/><path d="M1542 291.25 Q1542 286.25 1547 286.25 L2300 286.25 L2300 298.75 L1564 298.75 L1552 308.75 L1542 296.75 Z" fill="#d3e2f8" stroke="#3f74cc" stroke-width="1.15"/><path d="M1542 351.75 Q1542 346.75 1547 346.75 L2194 346.75 Q2199 346.75 2199 351.75 L2199 357.25 L2188 369.25 L2177 359.25 L1564 359.25 L1552 369.25 L1542 357.25 Z" fill="#d3e2f8" stroke="#3f74cc" stroke-width="1.15"/><rect x="1552" y="404.5" width="207.5" height="30.0" rx="6" fill="#d3e2f8" stroke="#3f74cc" stroke-width="1.15"/><rect x="1759" y="479" width="207" height="30.5" rx="6" fill="#d3e2f8" stroke="#3f74cc" stroke-width="1.15"/><rect x="1966" y="540.1" width="44.799999999999955" height="30.5" rx="6" fill="#d3e2f8" stroke="#3f74cc" stroke-width="1.15"/><rect x="2010.2" y="585.1" width="74.39999999999986" height="30.699999999999932" rx="6" fill="#d3e2f8" stroke="#3f74cc" stroke-width="1.15"/><rect x="2084.2" y="630.1" width="104.60000000000036" height="30.299999999999955" rx="6" fill="#d3e2f8" stroke="#3f74cc" stroke-width="1.15"/><path d="M2187.8 691 L2202.7 706 L2187.8 721 L2173 706 Z" fill="#d3e2f8" stroke="#3f74cc" stroke-width="1.15"/><path d="M2177.6 759.7 Q2177.6 754.7 2182.6 754.7 L2400 754.7 L2400 766.5 L2199.6 766.5 L2187.6 776.7 L2177.6 764.5 Z" fill="#d3e2f8" stroke="#3f74cc" stroke-width="1.15"/><rect x="2188.2" y="812.6" width="10.400000000000091" height="30.100000000000023" rx="6" fill="#d3e2f8" stroke="#3f74cc" stroke-width="1.15"/><rect x="2195.3" y="872.4" width="204.69999999999982" height="30.399999999999977" rx="6" fill="#d3e2f8" stroke="#3f74cc" stroke-width="1.15"/><rect x="2244.6" y="910.2" width="40" height="22.3" rx="6" fill="#fff" stroke="#111" stroke-width="1.5"/><rect x="2236.2" y="955.2" width="40" height="23.5" rx="6" fill="#fff" stroke="#111" stroke-width="1.5"/><path d="M2177.6 1015.3 Q2177.6 1010.3 2182.6 1010.3 L2400 1010.3 L2400 1022.7 L2199.6 1022.7 L2187.6 1033 L2177.6 1020.7 Z" fill="#d3e2f8" stroke="#3f74cc" stroke-width="1.15"/><rect x="2188" y="1053" width="212" height="30.700000000000045" rx="6" fill="#d3e2f8" stroke="#3f74cc" stroke-width="1.15"/><path d="M2196 1106.8 L2209 1114.3 L2196 1121.8 M2210 1106.8 L2223 1114.3 L2210 1121.8" fill="none" stroke="#2a63e0" stroke-width="2"/><path d="M2196 1152.8 L2209 1160.3 L2196 1167.8 M2210 1152.8 L2223 1160.3 L2210 1167.8" fill="none" stroke="#2a63e0" stroke-width="2"/><path d="M2196 1212.5 L2209 1220 L2196 1227.5 M2210 1212.5 L2223 1220 L2210 1227.5" fill="none" stroke="#2a63e0" stroke-width="2"/></svg>
<div class="a" style="left:2196.00px;top:912.00px;width:36.00px;height:34.00px;background:#f2f2f2;"></div>
<div class="t" style="top:287.40px;font-size:21.5px;line-height:25.8px;right:1345.75px;text-align:right;">Software selection and implementation</div>
<div class="t" style="top:347.40px;font-size:21.5px;line-height:25.8px;right:1345.50px;text-align:right;">Management documents</div>
<div class="t" style="top:407.40px;font-size:21.5px;line-height:25.8px;right:1335.75px;text-align:right;">Creation of target scenario/vision</div>
<div class="t" style="top:482.15px;font-size:21.5px;line-height:25.8px;right:1129.00px;text-align:right;">Creation of preliminary specification</div>
<div class="t" style="top:543.05px;font-size:21.5px;line-height:25.8px;right:946.00px;text-align:right;">ABC analysis</div>
<div class="t" style="top:588.05px;font-size:21.5px;line-height:25.8px;right:877.20px;text-align:right;">Feasibility study</div>
<div class="t" style="top:634.15px;font-size:21.5px;line-height:25.8px;right:803.20px;text-align:right;">Risk analysis</div>
<div class="t" style="top:694.15px;font-size:21.5px;line-height:25.8px;right:739.00px;text-align:right;">Create underlying documents</div>
<div class="t" style="top:753.95px;font-size:21.5px;line-height:25.8px;right:734.40px;text-align:right;">Form internal project team</div>
<div class="t" style="top:815.55px;font-size:21.5px;line-height:25.8px;right:699.60px;text-align:right;">Management requirements on forming the team</div>
<div class="t" style="top:875.05px;font-size:21.5px;line-height:25.8px;right:692.50px;text-align:right;">Candidate interviews</div>
<div class="t" style="top:920.05px;font-size:21.5px;line-height:25.8px;right:643.20px;text-align:right;">Initial team meeting</div>
<div class="t" style="top:966.15px;font-size:21.5px;line-height:25.8px;right:665.20px;text-align:right;">Internal team agreed</div>
<div class="t" style="top:1010.85px;font-size:21.5px;line-height:25.8px;right:734.40px;text-align:right;">Vendor pre-selection</div>
<div class="t" style="top:1057.05px;font-size:21.5px;line-height:25.8px;right:700.00px;text-align:right;">Vendor research</div>
</div></div>
<div class="a" style="left:22px;top:1287px;width:2228px;height:445px;border-radius:8px;overflow:hidden;background:#f2f2f2">
<div class="a" style="left:-22px;top:-1287px;width:2872px;height:1754px">
<div class="a" style="left:0.00px;top:1287.00px;width:2872.00px;height:70.00px;background:linear-gradient(#ececec,#e0e0e0);"></div>
<div class="a" style="left:647.00px;top:1287.00px;width:1.00px;height:70.00px;background:#b4b4b4;"></div>
<div class="a" style="left:1272.00px;top:1287.00px;width:1.00px;height:70.00px;background:#b4b4b4;"></div>
<div class="a" style="left:1697.00px;top:1287.00px;width:1.00px;height:70.00px;background:#b4b4b4;"></div>
<div class="a" style="left:1847.00px;top:1287.00px;width:1.00px;height:70.00px;background:#b4b4b4;"></div>
<div class="a" style="left:2008.50px;top:1287.00px;width:1.00px;height:70.00px;background:#b4b4b4;"></div>
<div class="a" style="left:0.00px;top:1357.00px;width:2872.00px;height:39.00px;background:#fafafa;"></div>
<div class="a" style="left:0.00px;top:1396.00px;width:2872.00px;height:41.00px;background:#f2f2f2;"></div>
<div class="a" style="left:0.00px;top:1437.00px;width:2872.00px;height:70.00px;background:#fafafa;"></div>
<div class="a" style="left:0.00px;top:1507.00px;width:2872.00px;height:70.00px;background:#f2f2f2;"></div>
<div class="a" style="left:0.00px;top:1577.00px;width:2872.00px;height:40.50px;background:#fafafa;"></div>
<div class="a" style="left:0.00px;top:1617.50px;width:2872.00px;height:39.00px;background:#f2f2f2;"></div>
<div class="a" style="left:0.00px;top:1656.50px;width:2872.00px;height:39.00px;background:#fafafa;"></div>
<div class="a" style="left:0.00px;top:1695.50px;width:2872.00px;height:44.50px;background:#f2f2f2;"></div>
<div class="a" style="left:0.00px;top:1356.25px;width:2872.00px;height:40.00px;background:#dae6f7;border-top:1.5px solid #3b77dc;border-bottom:1.5px solid #3b77dc;"></div>
<div class="t" style="top:1292.56px;font-size:24.5px;line-height:29.4px;left:29.50px;letter-spacing:0.2px;">Title</div>
<div class="t" style="top:1292.56px;font-size:24.5px;line-height:29.4px;left:655.00px;letter-spacing:0.2px;">Attached to</div>
<div class="t" style="top:1292.56px;font-size:24.5px;line-height:29.4px;left:1279.00px;letter-spacing:0.2px;">Status</div>
<div class="t" style="top:1292.56px;font-size:24.5px;line-height:29.4px;right:1031.00px;text-align:right;letter-spacing:0.2px;">Planned</div>
<div class="t" style="top:1322.56px;font-size:24.5px;line-height:29.4px;right:1031.00px;text-align:right;letter-spacing:0.2px;">Base Costs</div>
<div class="t" style="top:1292.56px;font-size:24.5px;line-height:29.4px;left:1854.00px;letter-spacing:0.2px;">Type</div>
<svg class="a" style="left:1983.00px;top:1313.00px;" width="22" height="16" viewBox="0 0 22 16"><path d="M0 0 L21 0 L10.5 15 Z" fill="#000"/></svg>
<svg class="a" style="left:28.00px;top:1364.50px;" width="24" height="22" viewBox="0 0 24 22"><rect x="1" y="2" width="21" height="19" fill="none" stroke="#000" stroke-width="2"/><path d="M4 10 L10 16 L21 2" fill="none" stroke="#000" stroke-width="2.6"/></svg>
<div class="t" style="top:1361.84px;font-size:25px;line-height:30.0px;left:57.00px;letter-spacing:0.17px;">Requirements on employee</div>
<div class="t" style="top:1361.84px;font-size:25px;line-height:30.0px;left:652.50px;letter-spacing:0.17px;">Form internal project team  &gt; Candidate interviews</div>
<svg class="a" style="left:1278.50px;top:1368.50px;" width="16" height="16" viewBox="0 0 16 16"><circle cx="8" cy="8" r="6" fill="none" stroke="#000" stroke-width="1.5"/></svg>
<div class="t" style="top:1361.84px;font-size:25px;line-height:30.0px;left:1302.50px;letter-spacing:0.17px;">Planned</div>
<div class="t" style="top:1361.84px;font-size:25px;line-height:30.0px;right:1029.00px;text-align:right;letter-spacing:0.17px;">$0.00</div>
<div class="t" style="top:1361.84px;font-size:25px;line-height:30.0px;left:1852.50px;letter-spacing:0.17px;">Checklist</div>
<svg class="a" style="left:28.00px;top:1404.80px;" width="24" height="24" viewBox="0 0 24 24"><rect x="1" y="4" width="21" height="19" fill="none" stroke="#000" stroke-width="1.8"/><rect x="1" y="4" width="21" height="4" fill="#000"/><path d="M5 1v5M18 1v5" stroke="#000" stroke-width="2"/><text x="11.5" y="20.5" font-size="11" text-anchor="middle" font-family="Liberation Sans" fill="#000">31</text></svg>
<div class="t" style="top:1402.14px;font-size:25px;line-height:30.0px;left:57.00px;letter-spacing:0.17px;">Report to management</div>
<div class="t" style="top:1402.14px;font-size:25px;line-height:30.0px;left:652.50px;letter-spacing:0.17px;">Implement function blocks &gt; FB 10 complete</div>
<svg class="a" style="left:1275.50px;top:1405.80px;" width="22" height="20" viewBox="0 0 22 20"><path d="M11 1 L21 19 L1 19 Z" fill="#f3a83b"/></svg>
<div class="t" style="top:1402.14px;font-size:25px;line-height:30.0px;left:1302.50px;letter-spacing:0.17px;">Requires Action</div>
<div class="t" style="top:1402.14px;font-size:25px;line-height:30.0px;right:1029.00px;text-align:right;letter-spacing:0.17px;">$0.00</div>
<div class="t" style="top:1402.14px;font-size:25px;line-height:30.0px;left:1852.50px;letter-spacing:0.17px;">Event</div>
<svg class="a" style="left:28.00px;top:1445.80px;" width="26" height="26" viewBox="0 0 26 26"><circle cx="9" cy="16" r="8" fill="#000"/><path d="M9 8 C10 3 14 3 16 6" fill="none" stroke="#000" stroke-width="1.5"/><path d="M19 1 L19 11 M14 6 L24 6 M15.5 2.5 L22.5 9.5 M22.5 2.5 L15.5 9.5" stroke="#000" stroke-width="1.6"/></svg>
<div class="t" style="top:1443.14px;font-size:25px;line-height:30.0px;left:57.00px;letter-spacing:0.17px;">Insufficient in-house know-how</div>
<div class="t" style="top:1443.14px;font-size:25px;line-height:30.0px;left:652.50px;letter-spacing:0.17px;">Software selection and implementation &gt; Vendor pre-</div>
<div class="t" style="top:1473.14px;font-size:25px;line-height:30.0px;left:652.50px;letter-spacing:0.17px;">selection</div>
<svg class="a" style="left:1277.50px;top:1446.80px;" width="18" height="18" viewBox="0 0 18 18"><rect x="1" y="1" width="16" height="16" fill="#d8402a"/></svg>
<div class="t" style="top:1443.14px;font-size:25px;line-height:30.0px;left:1302.50px;letter-spacing:0.17px;">High Risk</div>
<div class="t" style="top:1443.14px;font-size:25px;line-height:30.0px;right:1029.00px;text-align:right;letter-spacing:0.17px;">$0.00</div>
<div class="t" style="top:1443.14px;font-size:25px;line-height:30.0px;left:1852.50px;letter-spacing:0.17px;">Risk</div>
<svg class="a" style="left:28.00px;top:1515.80px;" width="24" height="24" viewBox="0 0 24 24"><circle cx="12" cy="12" r="11" fill="#000"/><circle cx="13" cy="6" r="2" fill="#fff"/><path d="M9 10 H14 L12 18 H15" fill="none" stroke="#fff" stroke-width="2.6"/></svg>
<div class="t" style="top:1513.14px;font-size:25px;line-height:30.0px;left:57.00px;letter-spacing:0.17px;">Alternatives to SAP</div>
<div class="t" style="top:1513.14px;font-size:25px;line-height:30.0px;left:652.50px;letter-spacing:0.17px;">Software selection and implementation &gt; Vendor pre-</div>
<div class="t" style="top:1543.14px;font-size:25px;line-height:30.0px;left:652.50px;letter-spacing:0.17px;">selection</div>
<svg class="a" style="left:1276.50px;top:1516.80px;" width="20" height="20" viewBox="0 0 20 20"><circle cx="10" cy="10" r="9" fill="#6fb244"/></svg>
<div class="t" style="top:1513.14px;font-size:25px;line-height:30.0px;left:1302.50px;letter-spacing:0.17px;">Email</div>
<div class="t" style="top:1513.14px;font-size:25px;line-height:30.0px;right:1029.00px;text-align:right;letter-spacing:0.17px;">$0.00</div>
<div class="t" style="top:1513.14px;font-size:25px;line-height:30.0px;left:1852.50px;letter-spacing:0.17px;">Information</div>
<svg class="a" style="left:28.00px;top:1585.80px;" width="24" height="24" viewBox="0 0 24 24"><path d="M3 1 H20 V16 L14 22 H3 Z" fill="none" stroke="#000" stroke-width="2"/><path d="M6 6H17M6 10H17M6 14H13" stroke="#000" stroke-width="1.8"/><path d="M13.5 22.5 V15.5 H20.5 Z" fill="#000"/></svg>
<div class="t" style="top:1583.14px;font-size:25px;line-height:30.0px;left:57.00px;letter-spacing:0.17px;">ABC analysis</div>
<div class="t" style="top:1583.14px;font-size:25px;line-height:30.0px;left:652.50px;letter-spacing:0.17px;">Management documents &gt; ABC analysis</div>
<svg class="a" style="left:1277.50px;top:1586.80px;" width="18" height="18" viewBox="0 0 18 18"><rect x="1" y="1" width="16" height="16" fill="#d8402a"/></svg>
<div class="t" style="top:1583.14px;font-size:25px;line-height:30.0px;left:1302.50px;letter-spacing:0.17px;">New</div>
<div class="t" style="top:1583.14px;font-size:25px;line-height:30.0px;right:1029.00px;text-align:right;letter-spacing:0.17px;">$0.00</div>
<div class="t" style="top:1583.14px;font-size:25px;line-height:30.0px;left:1852.50px;letter-spacing:0.17px;">File</div>
</div></div>
<div class="t" style="top:141.95px;font-size:23.3px;line-height:27.96px;left:2455.00px;color:#8f8f8f;letter-spacing:0.2px;">Checklist:</div>
<div class="t" style="top:141.95px;font-size:23.3px;line-height:27.96px;left:2566.00px;color:#ececec;letter-spacing:0.2px;">Info</div>
<div class="a" style="left:2275.00px;top:186.00px;width:573.00px;height:71.50px;border-radius:7px;background:linear-gradient(#707070,#626262);overflow:hidden;box-shadow:0 1px 1px rgba(0,0,0,.3)"></div>
<div class="a" style="left:2275.00px;top:186.00px;width:144.00px;height:71.50px;border-top-left-radius:7px;border-bottom-left-radius:7px;background:linear-gradient(#316ade,#2b5ec8);"></div>
<svg class="a" style="left:2328.00px;top:205.00px;" width="38" height="38" viewBox="0 0 38 38"><rect x="0" y="0" width="36" height="36" rx="1.5" fill="#fff"/><path d="M7.5 19 L14.5 26 L29 10.5" fill="none" stroke="#2d63d0" stroke-width="4.4" stroke-linecap="round" stroke-linejoin="round"/></svg>
<svg class="a" style="left:2472.00px;top:203.00px;" width="42" height="42" viewBox="0 0 42 42"><g fill="#e6e6e6"><rect x="4" y="1" width="24" height="5" rx="2.5"/><rect x="2" y="9" width="22" height="5" rx="2.5"/><rect x="1" y="17" width="19" height="5" rx="2.5"/><rect x="0" y="25" width="19" height="5" rx="2.5"/><rect x="0" y="33" width="19" height="5" rx="2.5"/><circle cx="28" cy="28" r="12.5"/></g><text x="28" y="35" font-size="19" font-weight="bold" text-anchor="middle" font-family="Liberation Sans" fill="#666">$</text><circle cx="28" cy="28" r="12.5" fill="none" stroke="#666" stroke-width="1.5"/></svg>
<svg class="a" style="left:2619.00px;top:205.00px;" width="38" height="38" viewBox="0 0 38 38"><g fill="#e6e6e6"><rect x="0" y="0" width="36" height="8" rx="4"/><rect x="0" y="14" width="36" height="8" rx="4"/><rect x="0" y="28" width="36" height="8" rx="4"/></g><rect x="24.2" y="0" width="3.6" height="38" fill="#6a6a6a"/></svg>
<svg class="a" style="left:2765.00px;top:205.00px;" width="38" height="38" viewBox="0 0 38 38"><rect x="0" y="0" width="36" height="36" rx="1" fill="#e6e6e6"/><path d="M7 30 L9 23 L24 8 L29 13 L14 28 Z" fill="#666"/><path d="M25 7 L27 5 L31 9 L29 11 Z" fill="#666"/></svg>
<svg class="a" style="left:2283.00px;top:290.00px;" width="16" height="20" viewBox="0 0 16 20"><path d="M1 1 L15 10 L1 19 Z" fill="#e8e8e8"/></svg>
<div class="t" style="top:285.45px;font-size:23.3px;line-height:27.96px;left:2315.00px;color:#ececec;font-weight:bold;letter-spacing:0.2px;">Title</div>
<div class="a" style="left:2476.00px;top:280.00px;width:372.50px;height:35.50px;background:#3a3a3c;border:1px solid #4e4e50;border-bottom-color:#5a5a5c;"></div>
<div class="t" style="top:285.64px;font-size:23.1px;line-height:27.72px;left:2483.50px;color:#ececec;letter-spacing:0.15px;">Requirements on employee</div>
<div class="a" style="left:2280.00px;top:335.00px;width:568.00px;height:1.50px;background:linear-gradient(90deg,rgba(80,80,82,0),#505052 10%,#505052 90%,rgba(80,80,82,0));"></div>
<div class="t" style="top:360.45px;font-size:23.3px;line-height:27.96px;left:2315.00px;color:#ececec;letter-spacing:0.2px;">Creation Date</div>
<div class="a" style="left:2477.00px;top:356.00px;width:371.00px;height:31.50px;background:#3a3a3c;border:1px solid #4e4e50;border-radius:2px;"></div>
<div class="a" style="left:2818.00px;top:356.00px;width:30.00px;height:31.50px;background:linear-gradient(#3b74e0,#2c5fcb);border-radius:0 5px 5px 0;"></div>
<svg class="a" style="left:2825.00px;top:367.00px;" width="16" height="10" viewBox="0 0 16 10"><path d="M2 2 L8 8 L14 2" fill="none" stroke="#fff" stroke-width="2.2"/></svg>
<div class="t" style="top:360.45px;font-size:23.3px;line-height:27.96px;left:2483.50px;color:#ececec;letter-spacing:0.2px;">July 2, 2005 at 10:34 AM</div>
<div class="t" style="top:411.95px;font-size:23.3px;line-height:27.96px;left:2315.00px;color:#ececec;letter-spacing:0.2px;">Status</div>
<div class="t" style="top:411.95px;font-size:23.3px;line-height:27.96px;left:2475.50px;color:#ececec;letter-spacing:0.2px;">Planned</div>
<div class="a" style="left:2308.50px;top:462.00px;width:540.00px;height:262.50px;border:1.5px solid #7a7a7c;border-radius:7px;background:#2f2f31;overflow:hidden;"></div>
<div class="a" style="left:2310.00px;top:502.50px;width:537.00px;height:180.00px;background:#1e1e20;"></div>
<div class="a" style="left:2310.00px;top:502.00px;width:537.00px;height:1.50px;background:#6e6e70;"></div>
<div class="a" style="left:2310.00px;top:681.50px;width:537.00px;height:1.50px;background:#5e5e60;"></div>
<div class="a" style="left:2346.00px;top:466.00px;width:1.00px;height:33.00px;background:#555557;"></div>
<div class="t" style="top:470.45px;font-size:23.3px;line-height:27.96px;left:2363.00px;color:#e8e8e8;letter-spacing:0.2px;">Title</div>
<div class="a" style="left:2315.00px;top:508.75px;width:24.00px;height:24.00px;border:2px solid #e6e6e6;border-radius:3px;"></div>
<div class="t" style="top:508.95px;font-size:23.3px;line-height:27.96px;left:2360.50px;color:#ececec;letter-spacing:0.2px;">Dependable</div>
<div class="a" style="left:2315.00px;top:544.75px;width:24.00px;height:24.00px;border:2px solid #e6e6e6;border-radius:3px;"></div>
<div class="t" style="top:544.95px;font-size:23.3px;line-height:27.96px;left:2360.50px;color:#ececec;letter-spacing:0.2px;">Team player</div>
<div class="a" style="left:2315.00px;top:580.75px;width:24.00px;height:24.00px;border:2px solid #e6e6e6;border-radius:3px;"></div>
<div class="t" style="top:580.95px;font-size:23.3px;line-height:27.96px;left:2360.50px;color:#ececec;letter-spacing:0.2px;">Experience in min. 5 function blocks</div>
<div class="a" style="left:2315.00px;top:616.75px;width:24.00px;height:24.00px;border:2px solid #e6e6e6;border-radius:3px;"></div>
<div class="t" style="top:616.95px;font-size:23.3px;line-height:27.96px;left:2360.50px;color:#ececec;letter-spacing:0.2px;">Basic knowledge of project management</div>
<div class="a" style="left:2315.00px;top:652.75px;width:24.00px;height:24.00px;border:2px solid #e6e6e6;border-radius:3px;"></div>
<div class="t" style="top:652.95px;font-size:23.3px;line-height:27.96px;left:2360.50px;color:#ececec;letter-spacing:0.2px;">additional project-specific points...</div>
<div class="a" style="left:2329.00px;top:702.00px;width:26.00px;height:2.00px;background:#e6e6e6;"></div>
<div class="a" style="left:2341.00px;top:690.00px;width:2.00px;height:26.00px;background:#e6e6e6;"></div>
<div class="a" style="left:2397.00px;top:702.00px;width:26.00px;height:2.00px;background:#e6e6e6;"></div>
<svg class="a" style="left:2789.00px;top:688.00px;" width="31" height="31" viewBox="0 0 31 31"><path d="M25.55 12.69 L29.83 12.77 L29.83 17.23 L25.55 17.31 L24.10 20.82 L27.07 23.91 L23.91 27.07 L20.82 24.10 L17.31 25.55 L17.23 29.83 L12.77 29.83 L12.69 25.55 L9.18 24.10 L6.09 27.07 L2.93 23.91 L5.90 20.82 L4.45 17.31 L0.17 17.23 L0.17 12.77 L4.45 12.69 L5.90 9.18 L2.93 6.09 L6.09 2.93 L9.18 5.90 L12.69 4.45 L12.77 0.17 L17.23 0.17 L17.31 4.45 L20.82 5.90 L23.91 2.93 L27.07 6.09 L24.10 9.18Z" fill="#e6e6e6"/><circle cx="15" cy="15" r="4.95" fill="#2e2e30"/></svg>
<svg class="a" style="left:2819.00px;top:705.00px;" width="16" height="10" viewBox="0 0 16 10"><path d="M1 1 L8 8 L15 1" fill="none" stroke="#e6e6e6" stroke-width="1.8"/></svg>
<svg class="a" style="left:2400px;top:1615px" width="90" height="85" viewBox="0 0 1594 1505" preserveAspectRatio="none"><path d="M300 262 H1210 Q1278 262 1278 335 V405 L1150 530 L1085 468 H410 L350 530 L232 405 V335 Q232 262 300 262 Z" fill="#1b1b1c"/><path d="M318 318 H1192 Q1222 318 1222 348 V392 L1150 462 L1092 412 H395 L350 462 L285 392 V348 Q285 318 318 318 Z" fill="#3a3a3c"/><rect x="303" y="462" width="905" height="280" rx="70" fill="#1b1b1c"/><rect x="355" y="515" width="795" height="175" rx="40" fill="#3a3a3c"/><path d="M1150 670 L1295 815 L1150 960 L1005 815 Z" fill="#1b1b1c"/><path d="M1150 735 L1230 815 L1150 895 L1070 815 Z" fill="#3a3a3c"/><ellipse cx="760" cy="1085" rx="548" ry="275" fill="#1b1b1c"/><ellipse cx="760" cy="1088" rx="495" ry="222" fill="#3a3a3c"/><ellipse cx="762" cy="1078" rx="408" ry="148" fill="#1b1b1c"/><path d="M430 1040 C465 800 370 500 470 290 C530 190 650 200 730 290 C890 460 1030 800 1075 1045 Q760 1160 430 1040 Z" fill="#1b1b1c"/><path d="M495 1030 C520 800 440 520 500 345 C550 270 640 280 705 345 C860 520 985 800 1025 1030 Q760 1125 495 1030 Z" fill="#3a3a3c"/><path d="M585 955 C585 780 505 560 550 390 C580 340 630 345 675 400 C805 560 915 800 948 955 Q760 1030 585 955 Z" fill="#1b1b1c"/><path d="M540 660 L660 720 L560 740 Z M560 840 L640 880 L580 900 Z" fill="#3a3a3c"/></svg>
<div class="t" style="top:1639.43px;font-size:36px;line-height:43.2px;left:2493.50px;color:#1d1d1f;font-weight:bold;">Merlin Project</div>
<div class="a" style="left:0.00px;top:0.00px;width:2872.00px;height:1.20px;background:rgba(255,255,255,.75);"></div>
<svg class="a" style="left:0.00px;top:0.00px;" width="6" height="6" viewBox="0 0 6 6"><path d="M0 0 H6 A6 6 0 0 0 0 6 Z" fill="#3f6c47"/></svg>
<svg class="a" style="left:2866.00px;top:0.00px;" width="6" height="6" viewBox="0 0 6 6"><path d="M6 0 V6 A6 6 0 0 0 0 0 Z" fill="#3f6c47"/></svg>
<svg class="a" style="left:0.00px;top:1748.00px;" width="6" height="6" viewBox="0 0 6 6"><path d="M0 6 V0 A6 6 0 0 0 6 6 Z" fill="#3f6c47"/></svg>
<svg class="a" style="left:2866.00px;top:1748.00px;" width="6" height="6" viewBox="0 0 6 6"><path d="M6 6 H0 A6 6 0 0 0 6 0 Z" fill="#3f6c47"/></svg>
</body></html>
